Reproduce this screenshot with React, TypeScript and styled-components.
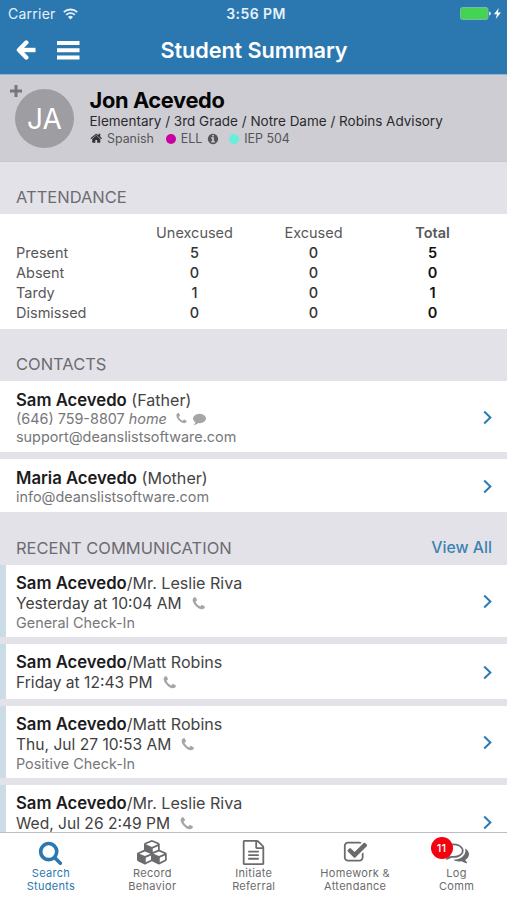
import React from "react";
import styled, { createGlobalStyle } from "styled-components";

const GlobalStyle = createGlobalStyle`
  *, *::before, *::after { box-sizing: border-box; }
  body { margin: 0; font-family: Inter, "Liberation Sans", sans-serif; background: #e3e2e9; }
`;

const paths = {
  search:
    "M1216 832q0-185-131.5-316.5t-316.5-131.5-316.5 131.5-131.5 316.5 131.5 316.5 316.5 131.5 316.5-131.5 131.5-316.5zm512 832q0 52-38 90t-90 38q-54 0-90-38l-343-342q-179 124-399 124-143 0-273.5-55.5t-225-150-150-225-55.5-273.5 55.5-273.5 150-225 225-150 273.5-55.5 273.5 55.5 225 150 150 225 55.5 273.5q0 220-124 399l343 343q37 37 37 90z",
  cubes:
    "M640 1632l384-192v-314l-384 164v342zm-64-454l404-173-404-173-404 173zm1088 454l384-192v-314l-384 164v342zm-64-454l404-173-404-173-404 173zm-448-293l384-165v-266l-384 164v267zm-64-379l441-189-441-189-441 189zm1088 518v416q0 36-19 67t-52 47l-448 224q-25 14-57 14t-57-14l-448-224q-4-2-7-4-2 2-7 4l-448 224q-25 14-57 14t-57-14l-448-224q-33-16-52-47t-19-67v-416q0-38 21.5-70t56.5-48l434-186v-400q0-38 21.5-70t56.5-48l448-192q23-10 50-10t50 10l448 192q35 16 56.5 48t21.5 70v400l434 186q36 16 57 48t21 70z",
  file:
    "M1596 380q28 28 48 76t20 88v1152q0 40-28 68t-68 28h-1344q-40 0-68-28t-28-68v-1600q0-40 28-68t68-28h896q40 0 88 20t76 48zm-444-244v376h376q-10-29-22-41l-313-313q-12-12-41-22zm384 1528v-1024h-416q-40 0-68-28t-28-68v-416h-768v1536h1280zm-1024-864q0-14 9-23t23-9h704q14 0 23 9t9 23v64q0 14-9 23t-23 9h-704q-14 0-23-9t-9-23v-64zm736 224q14 0 23 9t9 23v64q0 14-9 23t-23 9h-704q-14 0-23-9t-9-23v-64q0-14 9-23t23-9h704zm0 256q14 0 23 9t9 23v64q0 14-9 23t-23 9h-704q-14 0-23-9t-9-23v-64q0-14 9-23t23-9h704z",
  check:
    "M1472 930v318q0 119-84.5 203.5t-203.5 84.5h-832q-119 0-203.5-84.5t-84.5-203.5v-832q0-119 84.5-203.5t203.5-84.5h832q63 0 117 25 15 7 18 23 3 17-9 29l-49 49q-10 10-23 10-3 0-9-2-23-6-45-6h-832q-66 0-113 47t-47 113v832q0 66 47 113t113 47h832q66 0 113-47t47-113v-254q0-13 9-22l64-64q10-10 23-10 6 0 12 3 20 8 20 29zm231-489l-814 814q-24 24-57 24t-57-24l-430-430q-24-24-24-57t24-57l110-110q24-24 57-24t57 24l263 263 647-647q24-24 57-24t57 24l110 110q24 24 24 57t-24 57z",
  comments:
    "M704 384q-153 0-286 52t-211.5 141-78.5 191q0 82 53 158t149 132l97 56-35 84q34-20 62-39l44-31 53 10q78 14 153 14 153 0 286-52t211.5-141 78.5-191-78.5-191-211.5-141-286-52zm0-128q191 0 353.5 68.5t256.5 186.5 94 257-94 257-256.5 186.5-353.5 68.5q-86 0-176-16-124 88-278 128-36 9-86 16h-3q-11 0-20.5-8t-11.5-21q-1-3-1-6.5t.5-6.5 2-6l2.5-5 3.5-5.5 4-5 4.5-5 4-4.5q5-6 23-25t26-29.5 22.5-29 25-38.5 20.5-44q-124-72-195-177t-71-224q0-139 94-257t256.5-186.5 353.5-68.5zm822 1169q10 24 20.5 44t25 38.5 22.5 29 26 29.5 23 25q1 1 4 4.5t4.5 5 4 5 3.5 5.5l2.5 5 2 6 .5 6.5-1 6.5q-3 14-13 22t-22 7q-50-7-86-16-154-40-278-128-90 16-176 16-271 0-472-132 58 4 88 4 161 0 309-45t264-129q125-92 192-212t67-254q0-77-23-152 129 71 204 178t75 230q0 120-71 224.5t-195 176.5z",
  phone:
    "M1600 1240q0 27-10 70.5t-21 68.5q-21 50-122 106-94 51-186 51-27 0-53-3.5t-57.5-12.5-47-14.5-55.5-20.5-49-18q-98-35-175-83-127-79-264-216t-216-264q-48-77-83-175-3-9-18-49t-20.5-55.5-14.5-47-12.5-57.5-3.5-53q0-92 51-186 56-101 106-122 25-11 68.5-21t70.5-10q14 0 21 3 18 6 53 76 11 19 30 54t35 63.5 31 53.5q3 4 17.5 25t21.5 35.5 7 28.5q0 20-28.5 50t-62 55-62 53-28.5 46q0 9 5 22.5t8.5 20.5 14 24 11.5 19q76 137 174 235t235 174q2 1 19 11.5t24 14 20.5 8.5 22.5 5q18 0 46-28.5t53-62 55-62 50-28.5q14 0 28.5 7t35.5 21.5 25 17.5q25 15 53.5 31t63.5 35 54 30q70 35 76 53 3 7 3 21z",
  comment:
    "M1792 896q0 174-120 321.5t-326 233-450 85.5q-70 0-145-8-198 175-460 242-49 14-114 22-17 2-30.5-9t-17.5-29v-1q-3-4-.5-12t2-10 4.5-9.5l6-9 7-8.5 8-9q7-8 31-34.5t34.5-38 31-39.5 32.5-51 27-59 26-76q-157-89-247.5-220t-90.5-281q0-130 71-248.5t191-204.5 286-136.5 348-50.5q244 0 450 85.5t326 233 120 321.5z",
  home:
    "M1472 992v480q0 26-19 45t-45 19h-384v-384h-256v384h-384q-26 0-45-19t-19-45v-480q0-1 .5-3t.5-3l575-474 575 474q1 2 1 6zm223-69l-62 74q-8 9-21 11h-3q-13 0-21-7l-692-577-692 577q-12 8-24 7-13-2-21-11l-62-74q-8-10-7-23.5t11-21.5l719-599q32-26 76-26t76 26l244 204v-195q0-14 9-23t23-9h192q14 0 23 9t9 23v408l219 182q10 8 11 21.5t-7 23.5z",
  info:
    "M1152 1376v-160q0-14-9-23t-23-9h-96v-512q0-14-9-23t-23-9h-320q-14 0-23 9t-9 23v160q0 14 9 23t23 9h96v320h-96q-14 0-23 9t-9 23v160q0 14 9 23t23 9h448q14 0 23-9t9-23zm-128-896v-160q0-14-9-23t-23-9h-192q-14 0-23 9t-9 23v160q0 14 9 23t23 9h192q14 0 23-9t9-23zm640 416q0 209-103 385.5t-279.5 279.5-385.5 103-385.5-103-279.5-279.5-103-385.5 103-385.5 279.5-279.5 385.5-103 385.5 103 279.5 279.5 103 385.5z",
};

type IconName = keyof typeof paths;

const Svg = styled.svg`
  display: block;
  flex: none;
  fill: currentColor;
`;

function Icon({ name, size, wide = 1792 }: { name: IconName; size: number; wide?: number }) {
  return (
    <Svg width={(size * wide) / 1792} height={size} viewBox={`0 0 ${wide} 1792`}>
      <path d={paths[name]} />
    </Svg>
  );
}

const Screen = styled.div`
  width: 507px;
  height: 900px;
  display: flex;
  flex-direction: column;
  overflow: hidden;
  background: #e3e2e9;
  color: #4b4b4d;
`;

const Header = styled.header`
  flex: none;
  height: 75px;
  background: #2b78b0;
  border-bottom: 1px solid #8fb3d6;
  color: #fff;
`;

const StatusBar = styled.div`
  display: grid;
  grid-template-columns: 1fr auto 1fr;
  align-items: center;
  height: 27px;
  padding: 0 5px 0 8px;
  font-size: 14px;
  color: #e6f1f9;
`;

const Carrier = styled.div`
  display: flex;
  align-items: center;
  gap: 7px;
  letter-spacing: 0.25px;
`;

const Clock = styled.div`
  padding-left: 2px;
  font-weight: 600;
  font-size: 14px;
  letter-spacing: 0.4px;
`;

const Power = styled.div`
  display: flex;
  justify-content: flex-end;
`;

const NavBar = styled.div`
  display: grid;
  grid-template-columns: 96px 1fr 96px;
  align-items: center;
  height: 46px;
`;

const NavIcons = styled.div`
  display: flex;
  align-items: center;
  gap: 20px;
  padding-left: 16px;
`;

const Title = styled.h1`
  margin: 0;
  padding: 0 0 1px 1px;
  text-align: center;
  font-size: 21.7px;
  font-weight: 600;
  letter-spacing: -0.1px;
`;

const Profile = styled.section`
  flex: none;
  display: flex;
  height: 87px;
  padding: 14px 0 0 15px;
  background: #cecdd3;
  border-bottom: 1px solid #c8c8ce;
`;

const Avatar = styled.div`
  position: relative;
  width: 59px;
  height: 59px;
  margin-right: 15.5px;
  border-radius: 50%;
  background: #9e9da1;
  color: #fff;
  font-size: 28px;
  font-weight: 400;
  line-height: 60px;
  text-align: center;
`;

const AddMark = styled.svg`
  position: absolute;
  left: -5px;
  top: -4px;
`;

const Identity = styled.div`
  margin-top: -1px;
`;

const Name = styled.h2`
  margin: 0;
  font-size: 21.8px;
  line-height: 24px;
  font-weight: 700;
  letter-spacing: -0.35px;
  color: #050505;
`;

const Path = styled.div`
  font-size: 13.5px;
  line-height: 18px;
  color: #2a2a2c;
`;

const Tags = styled.div`
  display: flex;
  align-items: center;
  height: 17px;
  font-size: 12.4px;
  color: #555558;
`;

const Tag = styled.div<{ $gap?: number }>`
  display: flex;
  align-items: center;
  gap: 5px;
  margin-right: ${(p) => p.$gap ?? 12}px;
`;

const Dot = styled.span<{ $color: string }>`
  width: 10px;
  height: 10px;
  border-radius: 50%;
  background: ${(p) => p.$color};
`;

const Dark = styled.span`
  color: #333;
`;

const SectionHead = styled.div<{ $height: number }>`
  flex: none;
  display: flex;
  justify-content: space-between;
  align-items: flex-end;
  height: ${(p) => p.$height}px;
  padding: 0 15px 5px 16px;
  font-size: 16.5px;
  line-height: 24px;
  color: #6c6c70;
`;

const ViewAll = styled.a`
  font-size: 15.8px;
  font-weight: 500;
  color: #3d82b1;
`;

const Attendance = styled.div`
  flex: none;
  display: grid;
  grid-template-columns: 119px 119px 119px 119px;
  grid-auto-rows: 20px;
  height: 115px;
  padding: 8.5px 15px 0 16px;
  background: #fff;
  font-size: 14.5px;
  line-height: 20px;
`;

const Cell = styled.div<{ $kind: "label" | "head" | "value" | "total" | "totalHead" }>`
  text-align: ${(p) => (p.$kind === "label" ? "left" : "center")};
  font-weight: ${(p) => (p.$kind.startsWith("total") ? 600 : p.$kind === "value" ? 500 : 400)};
  color: ${(p) => (p.$kind === "total" ? "#111" : p.$kind === "value" ? "#333" : "#58585b")};
`;

const List = styled.div`
  flex: none;
  display: flex;
  flex-direction: column;
  gap: 7px;
`;

const Row = styled.div<{ $height: number; $accent?: boolean }>`
  display: flex;
  align-items: center;
  justify-content: space-between;
  height: ${(p) => p.$height}px;
  padding: ${(p) => (p.$accent ? "1px 15px 0 10px" : "2px 15px 0 16px")};
  border-left: ${(p) => (p.$accent ? "6px solid #ccdce4" : "none")};
  background: #fff;
`;

const Summary = styled.div`
  align-self: flex-start;
  padding-top: 7px;
`;

const Person = styled.div`
  font-size: 16.1px;
  line-height: 20px;
  color: #444;
  b {
    font-size: 16.7px;
    font-weight: 600;
    color: #1b1b1d;
  }
`;

const Detail = styled.div`
  display: flex;
  align-items: center;
  font-size: 14.4px;
  line-height: 18px;
  color: #77777a;
`;

const When = styled(Detail)`
  font-size: 15.6px;
  line-height: 21px;
  color: #3f3f42;
`;

const Glyph = styled.span<{ $left: number }>`
  margin-left: ${(p) => p.$left}px;
  color: #a5a5a8;
`;

const TabBar = styled.nav`
  flex: none;
  display: grid;
  grid-template-columns: repeat(5, 1fr);
  height: 68px;
  border-top: 1px solid #bdbdbf;
  background: #fff;
`;

const Tab = styled.div<{ $active?: boolean }>`
  position: relative;
  display: flex;
  flex-direction: column;
  align-items: center;
  padding: 5px 0 0 0.5px;
  font-size: 11px;
  line-height: 13px;
  letter-spacing: 0.3px;
  text-align: center;
  white-space: pre-line;
  color: ${(p) => (p.$active ? "#2b78b0" : "#6b6b6d")};
`;

const TabIcon = styled.div`
  display: flex;
  align-items: center;
  height: 29px;
`;

const Badge = styled.span`
  position: absolute;
  left: 25px;
  top: 4px;
  width: 22px;
  height: 22px;
  border-radius: 50%;
  background: #f4000f;
  color: #fff;
  font-size: 11px;
  line-height: 22px;
  font-weight: 500;
`;

const Scroll = styled.main`
  flex: 1;
  min-height: 0;
  overflow: hidden;
`;

const ChevronIcon = styled.svg`
  flex: none;
`;

function Chevron() {
  return (
    <ChevronIcon width="9" height="15" viewBox="0 0 9 15" fill="none" stroke="#2b7bb3" strokeWidth="2">
      <path d="M1.200 1.500l6.200 6-6.200 6" />
    </ChevronIcon>
  );
}

const attendance: [string, number, number, number][] = [
  ["Present", 5, 0, 5],
  ["Absent", 0, 0, 0],
  ["Tardy", 1, 0, 1],
  ["Dismissed", 0, 0, 0],
];

const communications = [
  { staff: "Mr. Leslie Riva", when: "Yesterday at 10:04 AM", topic: "General Check-In", height: 72 },
  { staff: "Matt Robins", when: "Friday at 12:43 PM", topic: "", height: 55 },
  { staff: "Matt Robins", when: "Thu, Jul 27 10:53 AM", topic: "Positive Check-In", height: 72 },
  { staff: "Mr. Leslie Riva", when: "Wed, Jul 26 2:49 PM", topic: "", height: 74 },
];

const tabs: { icon: IconName; label: string; size: number; wide?: number; badge?: string }[] = [
  { icon: "search", label: "Search\nStudents", size: 25 },
  { icon: "cubes", label: "Record\nBehavior", size: 24.5, wide: 2176 },
  { icon: "file", label: "Initiate\nReferral", size: 25 },
  { icon: "check", label: "Homework &\nAttendance", size: 25 },
  { icon: "comments", label: "Log\nComm", size: 25, badge: "11" },
];

export default function App() {
  return (
    <Screen>
      <GlobalStyle />
      <Header>
        <StatusBar>
          <Carrier>
            Carrier
            <svg width="15" height="12" viewBox="0 0 15 12" fill="none" stroke="currentColor" strokeWidth="1.8">
              <path d="M.8 4.2a9.6 9.6 0 0 1 13.4 0M3.2 6.8a6.2 6.2 0 0 1 8.6 0" />
              <path d="M7.5 11.5L5 9a3.6 3.6 0 0 1 5 0z" fill="currentColor" stroke="none" />
            </svg>
          </Carrier>
          <Clock>3:56 PM</Clock>
          <Power>
            <svg width="42" height="13" viewBox="0 0 42 13">
              <rect x=".5" y=".5" width="27.5" height="12" rx="2" fill="#43d551" stroke="#79b8ae" />
              <path d="M29 4.5q2 .3 2 2t-2 2z" fill="#cde5f0" />
              <path d="M38.8 1L34 7.3h3L35.7 12 41 5.4h-3.2z" fill="#fff" />
            </svg>
          </Power>
        </StatusBar>
        <NavBar>
          <NavIcons>
            <svg width="20" height="20" viewBox="0 0 20 20" fill="none" stroke="#fff" strokeWidth="4.4">
              <path d="M3 10h16.5" />
              <path d="M10.3 2.5L3 10l7.3 7.5" strokeLinecap="round" strokeLinejoin="round" />
            </svg>
            <svg width="24" height="20" viewBox="0 0 24 20" fill="#fff">
              <path d="M1 1h22.5v4H1zM1 8.2h22.5v4H1zM1 15.5h22.5v4H1z" />
            </svg>
          </NavIcons>
          <Title>Student Summary</Title>
        </NavBar>
      </Header>
      <Scroll>
        <Profile>
          <Avatar>
            JA
            <AddMark width="12" height="12" viewBox="0 0 12 12" stroke="#77777a" strokeWidth="3">
              <path d="M6 0v12M0 6h12" />
            </AddMark>
          </Avatar>
          <Identity>
            <Name>Jon Acevedo</Name>
            <Path>Elementary / 3rd Grade / Notre Dame / Robins Advisory</Path>
            <Tags>
              <Tag>
                <Dark>
                  <Icon name="home" size={12.5} />
                </Dark>
                Spanish
              </Tag>
              <Tag $gap={10}>
                <Dot $color="#c800a1" />
                ELL
                <Icon name="info" size={12} />
              </Tag>
              <Tag>
                <Dot $color="#66f0dc" />
                IEP 504
              </Tag>
            </Tags>
          </Identity>
        </Profile>
        <SectionHead $height={52}>ATTENDANCE</SectionHead>
        <Attendance>
          <Cell $kind="label" />
          <Cell $kind="head">Unexcused</Cell>
          <Cell $kind="head">Excused</Cell>
          <Cell $kind="totalHead">Total</Cell>
          {attendance.map(([label, unexcused, excused, total]) => (
            <React.Fragment key={label}>
              <Cell $kind="label">{label}</Cell>
              <Cell $kind="value">{unexcused}</Cell>
              <Cell $kind="value">{excused}</Cell>
              <Cell $kind="total">{total}</Cell>
            </React.Fragment>
          ))}
        </Attendance>
        <SectionHead $height={52}>CONTACTS</SectionHead>
        <List>
          <Row $height={71}>
            <div>
              <Person>
                <b>Sam Acevedo</b> (Father)
              </Person>
              <Detail>
                (646) 759-8807&nbsp;<i>home</i>
                <Glyph $left={8}>
                  <Icon name="phone" size={13} />
                </Glyph>
                <Glyph $left={5.5}>
                  <Icon name="comment" size={13} />
                </Glyph>
              </Detail>
              <Detail>support@deanslistsoftware.com</Detail>
            </div>
            <Chevron />
          </Row>
          <Row $height={53}>
            <div>
              <Person>
                <b>Maria Acevedo</b> (Mother)
              </Person>
              <Detail>info@deanslistsoftware.com</Detail>
            </div>
            <Chevron />
          </Row>
        </List>
        <SectionHead $height={53}>
          RECENT COMMUNICATION
          <ViewAll>View All</ViewAll>
        </SectionHead>
        <List>
          {communications.map((c) => (
            <Row key={c.when} $height={c.height} $accent>
              <Summary>
                <Person>
                  <b>Sam Acevedo</b>/{c.staff}
                </Person>
                <When>
                  {c.when}
                  <Glyph $left={9}>
                    <Icon name="phone" size={15.5} />
                  </Glyph>
                </When>
                {c.topic && <Detail>{c.topic}</Detail>}
              </Summary>
              <Chevron />
            </Row>
          ))}
        </List>
      </Scroll>
      <TabBar>
        {tabs.map((t, i) => (
          <Tab key={t.icon} $active={i === 0}>
            <TabIcon>
              <Icon name={t.icon} size={t.size} wide={t.wide} />
            </TabIcon>
            {t.label}
            {t.badge && <Badge>{t.badge}</Badge>}
          </Tab>
        ))}
      </TabBar>
    </Screen>
  );
}
